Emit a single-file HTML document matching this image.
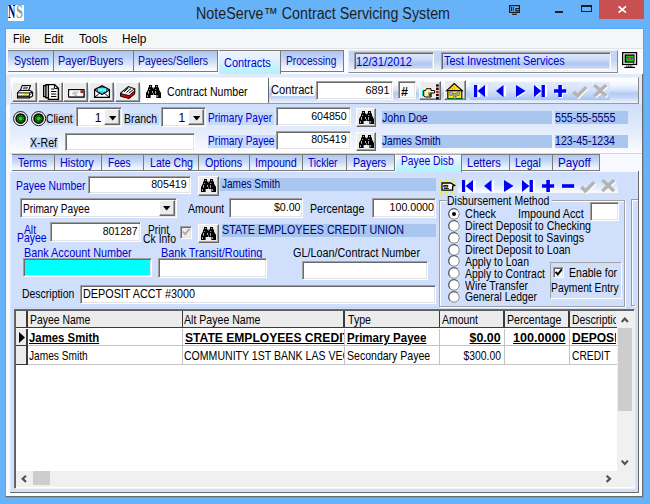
<!DOCTYPE html>
<html>
<head>
<meta charset="utf-8">
<title>NoteServe Contract Servicing System</title>
<style>
*{box-sizing:border-box;margin:0;padding:0}
html,body{width:650px;height:504px;overflow:hidden;background:#67b3f9;font-family:"Liberation Sans",sans-serif;font-size:13px;color:#000}
.a{position:absolute;white-space:nowrap;line-height:1}
.t{display:block}
#win{position:absolute;left:0;top:0;width:650px;height:504px;background:#67b3f9;overflow:hidden}
.inp{background:#fff;border:1px solid;border-color:#a0a0a0 #fff #fff #a0a0a0;box-shadow:inset 1px 1px 0 #696969,inset -1px -1px 0 #e3e3e3}
.btn{background:#ececec;border:1px solid;border-color:#fff #696969 #696969 #fff;box-shadow:inset -1px -1px 0 #a0a0a0}
.fld{background:#a8c6ee}
.tab{border:1px solid #7a7a7a;border-left:none;background:linear-gradient(#a9c5ef,#c0d4f5 35%,#eaf1fc 80%,#fbfcff)}
.stab{border-right:1px solid #7a7a7a;border-top:1px solid #7a7a7a;background:linear-gradient(#aec7f1,#c4d7f6 40%,#eef3fd 85%,#f6f9fe)}
svg{position:absolute;overflow:visible}

</style>
</head>
<body>
<div id="win">
<div class="a " style="left:8.00px;top:4.90px;width:16.00px;height:16.00px;background:#fff;overflow:hidden"><div class="a" style="left:0.2px;top:-1.8px;font-family:'Liberation Serif',serif;font-weight:bold;font-size:18px;color:#000068;transform:scaleX(.56);transform-origin:0 0">N</div><div class="a" style="left:7.8px;top:-1.8px;font-family:'Liberation Serif',serif;font-weight:bold;font-size:18px;color:#9a9aa2;transform:scaleX(.7);transform-origin:0 0">S</div></div>
<div class="a t" style="top:6.00px;font-size:16px;color:#1e1e1e;left:196.29px;transform-origin:0 0;transform:scaleX(0.8926);">NoteServe™ Contract Servicing System</div>
<svg style="left:508.50px;top:4.50px" width="11" height="10" viewBox="0 0 11 10"><rect x=".6" y=".6" width="9.8" height="6.8" fill="none" stroke="#1e1e1e" stroke-width="1.2"/><path d="M2.5 2v4M4.3 2v4" stroke="#1e1e1e" stroke-width="1"/><rect x="6.3" y="3" width="4.7" height="3.4" fill="#1e1e1e"/><rect x="7.6" y="4" width="2" height="1.2" fill="#67b3f9"/><path d="M3 9.3h5" stroke="#1e1e1e" stroke-width="1.2"/></svg>
<div class="a " style="left:555.30px;top:10.50px;width:8.10px;height:2.20px;background:#1e1e1e"></div>
<div class="a " style="left:581.00px;top:5.40px;width:10.50px;height:7.00px;border:1px solid #1e1e1e;border-top-width:2px"></div>
<div class="a " style="left:599.00px;top:0.00px;width:45.00px;height:18.60px;background:#c75050"></div>
<svg style="left:617.80px;top:6.00px" width="8.6" height="7" viewBox="0 0 8.6 7"><path d="M.6 .3l7.4 6.4M8 .3l-7.4 6.4" stroke="#fff" stroke-width="1.7"/></svg>
<div class="a " style="left:5.00px;top:28.00px;width:639.00px;height:470.00px;background:#58a5f0"></div>
<div class="a " style="left:6.00px;top:29.00px;width:637.00px;height:468.00px;background:#c3d8f8"></div>
<div class="a " style="left:6.00px;top:29.00px;width:637.00px;height:19.00px;background:#f5f6f7"></div>
<div class="a t" style="top:33.00px;font-size:12px;color:#000;left:12.96px;transform-origin:0 0;transform:scaleX(0.8948);">File</div>
<div class="a t" style="top:33.00px;font-size:12px;color:#000;left:44.43px;transform-origin:0 0;transform:scaleX(0.9430);">Edit</div>
<div class="a t" style="top:33.00px;font-size:12px;color:#000;left:78.89px;transform-origin:0 0;transform:scaleX(1.0103);">Tools</div>
<div class="a t" style="top:33.00px;font-size:12px;color:#000;left:121.71px;transform-origin:0 0;transform:scaleX(0.9887);">Help</div>
<div class="a " style="left:6.00px;top:48.00px;width:637.00px;height:26.20px;background:#fafbfe"></div>
<div class="a " style="left:6.00px;top:74.20px;width:637.00px;height:30.80px;background:#e2ebfc"></div>
<div class="a " style="left:6.00px;top:48.00px;width:637.00px;height:1.00px;background:#e2e3e5"></div>
<div class="a " style="left:7.60px;top:50.30px;width:1.00px;height:22.10px;background:#7a7a7a"></div>
<div class="a tab" style="left:8.00px;top:50.30px;width:45.50px;height:22.10px;"></div>
<div class="a t" style="top:55.00px;font-size:12px;color:#0a0aa8;left:13.78px;transform-origin:0 0;transform:scaleX(0.8748);">System</div>
<div class="a tab" style="left:53.50px;top:50.30px;width:80.20px;height:22.10px;"></div>
<div class="a t" style="top:55.00px;font-size:12px;color:#0a0aa8;left:58.46px;transform-origin:0 0;transform:scaleX(0.9066);">Payer/Buyers</div>
<div class="a tab" style="left:133.70px;top:50.30px;width:84.70px;height:22.10px;"></div>
<div class="a t" style="top:55.00px;font-size:12px;color:#0a0aa8;left:138.48px;transform-origin:0 0;transform:scaleX(0.8746);">Payees/Sellers</div>
<div class="a tab" style="left:280.70px;top:50.30px;width:63.30px;height:22.10px;"></div>
<div class="a t" style="top:55.00px;font-size:12px;color:#0a0aa8;left:285.89px;transform-origin:0 0;transform:scaleX(0.8474);">Processing</div>
<div class="a " style="left:218.40px;top:50.30px;width:62.50px;height:23.70px;border:1px solid #7a7a7a;border-bottom:none;border-left-color:#fff;background:linear-gradient(#f0f4fe,#e2f0fd 35%,#c2f3fb 75%,#b2f1fb)"></div>
<div class="a t" style="top:57.00px;font-size:12px;color:#0000d8;left:223.95px;transform-origin:0 0;transform:scaleX(0.9114);">Contracts</div>
<div class="a " style="left:348.30px;top:50.30px;width:269.70px;height:22.50px;border:1px solid;border-color:#dfe8f8 #8c8c8c #8c8c8c #e8eefa;background:linear-gradient(#c4d6f6,#c3d5f5 45%,#e6edfb 85%,#f6f8fe)"></div>
<div class="a inp" style="left:354.20px;top:52.20px;width:79.80px;height:17.40px;background:linear-gradient(#e0e9fb,#cfdef8 35%,#aec7f1 70%,#cbdbf7 100%)"></div>
<div class="a inp" style="left:441.00px;top:52.20px;width:169.60px;height:17.40px;background:linear-gradient(#e0e9fb,#cfdef8 35%,#aec7f1 70%,#cbdbf7 100%)"></div>
<div class="a t" style="top:56.00px;font-size:12px;color:#0000d8;left:356.44px;transform-origin:0 0;transform:scaleX(0.9325);">12/31/2012</div>
<div class="a t" style="top:55.00px;font-size:12px;color:#0000d8;left:443.86px;transform-origin:0 0;transform:scaleX(0.9049);">Test Investment Services</div>
<svg style="left:621.90px;top:51.80px" width="15.2" height="16" viewBox="0 0 15.2 16"><rect x=".65" y=".65" width="13.9" height="11.8" fill="#fff" stroke="#000" stroke-width="1.3"/><rect x="2.6" y="2.4" width="10" height="8.3" fill="#000"/><rect x="4.2" y="3.7" width="7.5" height="5.7" fill="#00e000"/><rect x="5.2" y="4.7" width="2" height="1.8" fill="#f00000"/><rect x="8.6" y="4.7" width="2" height="1.8" fill="#f00000"/><rect x="5.2" y="6.4" width="5.4" height="1.3" fill="#f000e0"/><rect x="11" y="11" width="1.1" height="1.1" fill="#f00000"/><rect x="5.6" y="13" width="4" height="1.9" fill="#b0b0b0"/><path d="M4 14.2h7.2" stroke="#000" stroke-width=".8" stroke-dasharray="1.4 .8"/><rect x="2.3" y="14.9" width="10.8" height="1.1" fill="#000"/></svg>
<div class="a " style="left:9.70px;top:77.00px;width:629.10px;height:27.30px;border:1px solid;border-color:#eef2fb #8a8a8a #9a9a9a #f4f7fd;background:linear-gradient(#fff 0%,#f4f8fe 25%,#dbe6fb 45%,#b3cbf3 62%,#c3d6f6 78%,#e9f0fc 97%)"></div>
<div class="a btn" style="left:12.00px;top:82.00px;width:25.00px;height:19.60px;"></div>
<div class="a btn" style="left:37.80px;top:82.00px;width:25.00px;height:19.60px;"></div>
<div class="a btn" style="left:63.40px;top:82.00px;width:25.00px;height:19.60px;"></div>
<div class="a btn" style="left:89.00px;top:82.00px;width:25.00px;height:19.60px;"></div>
<div class="a btn" style="left:114.60px;top:82.00px;width:25.00px;height:19.60px;"></div>
<svg style="left:16.80px;top:84.80px" width="16" height="13.5" viewBox="0 0 16 13.5"><path d="M5.2 .5h8.2l-1.8 5h-8.2z" fill="#fff" stroke="#000" stroke-width="1.1"/><path d="M6.4 2.2h4.6M5.8 3.8h4.6" stroke="#000" stroke-width=".8"/><path d="M2.6 5.5h10.6l2.4 1.8v3.6l-3.2 2h-11.9v-5z" fill="#fff" stroke="#000" stroke-width="1.1"/><path d="M.5 7.9h11.9l3.2-.6M12.4 7.9v5" fill="none" stroke="#000" stroke-width="1"/><path d="M.5 11.2h11.9" stroke="#000" stroke-width="1.3"/><rect x="6.6" y="9" width="3.2" height="1.2" fill="#f0e000"/><path d="M13 9.6l2.4-1.4" stroke="#000" stroke-width=".7"/></svg>
<svg style="left:43.00px;top:83.90px" width="16" height="16" viewBox="0 0 16 16"><path d="M.7 1.6h3.6v11h-3.6z" fill="#fff" stroke="#000" stroke-width="1.4"/><path d="M2.9 .8h3.6v13h-3.6z" fill="#fff" stroke="#000" stroke-width="1.4"/><path d="M5.4 .6h6.2l3.8 3.8v11h-10z" fill="#fff" stroke="#000" stroke-width="1.4"/><path d="M11.4 .8v3.8h3.8" fill="none" stroke="#000" stroke-width="1"/><path d="M8 5h3M8 7.5h5.4M8 10h5.4M8 12.5h5.4" stroke="#000" stroke-width="1"/></svg>
<svg style="left:67.80px;top:88.70px" width="16.7" height="8.8" viewBox="0 0 16.7 8.8"><rect x=".6" y=".6" width="15.4" height="7.4" fill="#fff" stroke="#000" stroke-width="1.1"/><path d="M1.2 8.3h15.2v-7" fill="none" stroke="#000" stroke-width=".6"/><rect x="12.4" y="1.3" width="3" height="2.8" fill="#e01010"/><rect x="13.6" y="1.3" width="1.8" height="1.4" fill="#10a030"/><rect x="14.3" y="1.7" width="1.1" height="1.1" fill="#1020d0"/><path d="M5 3.2h5.6M4 4.8h5M6 6.2h3.6" stroke="#777" stroke-width=".6"/></svg>
<svg style="left:94.20px;top:84.80px" width="16" height="13" viewBox="0 0 16 13"><path d="M.6 4.6l7.4-4 7.4 4v7.8h-14.8z" fill="#fff" stroke="#000" stroke-width="1.2"/><path d="M3 3.2q5-2.6 10 0v3.6l-5 2.6-5-2.6z" fill="#18e0f0" stroke="#000" stroke-width=".8"/><path d="M4 4.1h8M4 5.7h8" stroke="#a0f8ff" stroke-width=".9"/><path d="M.6 5l7.4 4.6 7.4-4.6M.8 12.2l5.4-4.4M15.2 12.2l-5.4-4.4" fill="none" stroke="#000" stroke-width="1"/></svg>
<svg style="left:119.50px;top:85.60px" width="15.3" height="12.7" viewBox="0 0 15.3 12.7"><path d="M.6 7.2l7.8-6.6 6.4 2.2-.2 3.8-5.6 5.6-8.4-2.6z" fill="#fff" stroke="#000" stroke-width="1.1"/><path d="M4 5.8l4.6-4M6.4 6.6l4.8-4.2M8.8 7.2l5-4" stroke="#000" stroke-width="1"/><path d="M.7 7.6l8.5 2 5.4-4.8v3.4l-5.4 4.2-8.5-2z" fill="#e80000" stroke="#000" stroke-width=".9"/><path d="M9.2 9.6v2.8" stroke="#500" stroke-width=".7"/></svg>
<div class="a " style="left:140.60px;top:78.00px;width:128.00px;height:25.40px;background:#fff;border-right:1px solid #6a6a6a"></div>
<svg style="left:146.20px;top:85.00px" width="15" height="13" viewBox="0 0 15 13"><path d="M3 0h3v2.5h1.3v7.5h-2.7v3h-4.6v-5l2-3.5v-2h1z" fill="#000"/><path d="M12 0h-3v2.5h-1.3v7.5h2.7v3h4.6v-5l-2-3.5v-2h-1z" fill="#000"/><rect x="6.8" y="3.8" width="1.4" height="4.4" fill="#000"/><g fill="#fff" opacity=".85"><rect x="4" y="1" width=".9" height=".9"/><rect x="10" y="1" width=".9" height=".9"/><rect x="3.2" y="4" width=".9" height=".9"/><rect x="9.3" y="4" width=".9" height=".9"/><rect x="2.1" y="6" width=".8" height="2.8"/><rect x="6" y="6" width=".8" height="1.9"/><rect x="9.2" y="6" width=".8" height="2.8"/><rect x="1.2" y="10.2" width=".8" height="1.8"/><rect x="11.3" y="10.2" width=".8" height="1.8"/></g></svg>
<div class="a t" style="top:86.00px;font-size:12px;color:#000;left:167.47px;transform-origin:0 0;transform:scaleX(0.8822);">Contract Number</div>
<div class="a " style="left:271.50px;top:83.50px;width:43.00px;height:12.50px;background:#f8faff"></div>
<div class="a t" style="top:84.00px;font-size:12px;color:#000;left:271.44px;transform-origin:0 0;transform:scaleX(0.9261);">Contract</div>
<div class="a inp" style="left:316.00px;top:81.00px;width:77.00px;height:18.60px;"></div>
<div class="a t" style="top:85.00px;font-size:11px;color:#000;right:260.30px;transform-origin:100% 0;transform:scaleX(0.9808);">6891</div>
<div class="a inp" style="left:397.60px;top:81.00px;width:18.00px;height:18.20px;background:#fbfbfb"></div>
<div class="a t" style="top:86.00px;font-size:12px;color:#000;font-weight:bold;left:400.97px;transform-origin:0 0;transform:scaleX(1.0489);">#</div>
<div class="a btn" style="left:418.50px;top:80.50px;width:22.30px;height:19.50px;"></div>
<svg style="left:421.50px;top:83.50px" width="17" height="16" viewBox="0 0 17 16"><g transform="translate(0,4.2)"><rect x="0" y="2.1" width="1.7" height="5.9" fill="#10d8e8"/><path d="M1.7 2.3h1.9l.8-1.8h4.6v1.8h3.6v2.5h-3.5v4h-5.4l-2-1z" fill="#fbf4a0" stroke="#000" stroke-width="1"/><path d="M6.2 4.8h2.9M6.6 6.2h2.5M6.6 7.5h2.5" stroke="#000" stroke-width=".8"/></g><g fill="#000"><rect x="14.1" y="0.3" width="2.6" height="2.3"/><rect x="14.1" y="3.6" width="2.6" height="2.3"/><rect x="14.1" y="9.8" width="2.6" height="2.3"/><rect x="14.1" y="13" width="2.6" height="2.3"/></g><rect x="14.1" y="6.8" width="2.6" height="2.2" fill="#f00000"/></svg>
<div class="a btn" style="left:444.00px;top:80.00px;width:21.50px;height:20.30px;"></div>
<svg style="left:446.00px;top:82.80px" width="18" height="16.7" viewBox="0 0 18 16.7"><path d="M.6 7.6l7.6-7 8 7z" fill="#f8e820" stroke="#000" stroke-width="1.1"/><path d="M4 6l4-3.6M6 6.4l3.4-3M8.4 6.4l2-1.8" stroke="#e02000" stroke-width=".9" stroke-dasharray=".9 1.5"/><path d="M1.8 7.6h14v8h-14z" fill="#f8e820" stroke="#000" stroke-width="1.1"/><rect x="3.8" y="9" width="2.6" height="3.6" fill="#b0b0c0" stroke="#606060" stroke-width=".6"/><rect x="11" y="9" width="2.6" height="3.6" fill="#b0b0c0" stroke="#606060" stroke-width=".6"/><rect x="7.6" y="10.6" width="2.4" height="5" fill="#b0b0c0" stroke="#606060" stroke-width=".6"/><rect x="9.2" y="12.8" width=".9" height=".9" fill="#e00000"/><rect x="1" y="15.6" width="17" height="1.1" fill="#10e010"/></svg>
<div class="a " style="left:470.00px;top:82.10px;width:140.00px;height:17.80px;background:linear-gradient(#e3ecfc,#d5e2fa 45%,#a9c4f0)"></div>
<svg style="left:473.80px;top:84.90px" width="14" height="12" viewBox="0 0 14 12"><path d="M0 0h3.2v12h-3.2zM11 0v12l-7.4-6z" fill="#fff" transform="translate(2.6,0)"/><path d="M0 0h3.2v12h-3.2zM11 0v12l-7.4-6z" fill="#0000f0"/></svg>
<svg style="left:495.70px;top:84.90px" width="10" height="12" viewBox="0 0 10 12"><path d="M7.5 0v12l-7.5-6z" fill="#fff" transform="translate(2.6,0)"/><path d="M7.5 0v12l-7.5-6z" fill="#0000f0"/></svg>
<svg style="left:516.00px;top:84.90px" width="11" height="13" viewBox="0 0 11 13"><path d="M0 0v12l9.6-6z" fill="#fff" transform="translate(.8,1)"/><path d="M0 0v12l9.6-6z" fill="#0000f0"/></svg>
<svg style="left:534.20px;top:84.90px" width="13" height="12" viewBox="0 0 13 12"><path d="M0 0v12l7.4-6zM7.6 0h3.3v12h-3.3z" fill="#fff" transform="translate(2.2,0)"/><path d="M0 0v12l7.4-6zM7.6 0h3.3v12h-3.3z" fill="#0000f0"/></svg>
<svg style="left:553.80px;top:84.90px" width="13.5" height="13" viewBox="0 0 13.5 13"><path d="M4.3 0h3.6v4.2h4.3v3.6h-4.3v4.2h-3.6v-4.2h-4.3v-3.6h4.3z" fill="#fff" transform="translate(1,1)"/><path d="M4.3 0h3.6v4.2h4.3v3.6h-4.3v4.2h-3.6v-4.2h-4.3v-3.6h4.3z" fill="#0000f0"/></svg>
<svg style="left:572.00px;top:85.60px" width="16.5" height="13.5" viewBox="0 0 16.5 13.5"><path d="M0 7.2l2.8-2.6 2.8 2.6 7.4-7.2 2.5 2.2-10 10.3z" fill="#fff" transform="translate(1,1)"/><path d="M0 7.2l2.8-2.6 2.8 2.6 7.4-7.2 2.5 2.2-10 10.3z" fill="#b4b4b4"/></svg>
<svg style="left:593.00px;top:84.20px" width="15.4" height="14.3" viewBox="0 0 15.4 14.3"><path d="M0 2.2l2.6-2.2 4.6 4 4.6-4 2.6 2.2-4.8 4.4 4.8 4.4-2.6 2.3-4.6-4.2-4.6 4.2-2.6-2.3 4.8-4.4z" fill="#fff" transform="translate(1,1)"/><path d="M0 2.2l2.6-2.2 4.6 4 4.6-4 2.6 2.2-4.8 4.4 4.8 4.4-2.6 2.3-4.6-4.2-4.6 4.2-2.6-2.3 4.8-4.4z" fill="#b4b4b4"/></svg>
<div class="a " style="left:10.30px;top:104.30px;width:631.70px;height:49.20px;background:linear-gradient(#cfdffb 0%,#d9e6fb 30%,#e6eefc 60%,#f3f7fe 85%,#fbfcff 100%)"></div>
<svg style="left:12.80px;top:110.60px" width="15.2" height="15.2" viewBox="0 0 15.2 15.2"><circle cx="7.6" cy="7.6" r="7.05" fill="#f4f4f4" stroke="#101010" stroke-width="1"/><circle cx="7.6" cy="7.6" r="4.6" fill="#063406" stroke="#050505" stroke-width="1.4"/><circle cx="7.6" cy="7.6" r="3.2" fill="none" stroke="#28e828" stroke-width=".9" stroke-dasharray="1.25 1.26"/><circle cx="7.6" cy="7.6" r="2.1" fill="#10d810"/></svg>
<svg style="left:31.30px;top:110.60px" width="15.2" height="15.2" viewBox="0 0 15.2 15.2"><circle cx="7.6" cy="7.6" r="7.05" fill="#f4f4f4" stroke="#101010" stroke-width="1"/><circle cx="7.6" cy="7.6" r="4.6" fill="#063406" stroke="#050505" stroke-width="1.4"/><circle cx="7.6" cy="7.6" r="3.2" fill="none" stroke="#28e828" stroke-width=".9" stroke-dasharray="1.25 1.26"/><circle cx="7.6" cy="7.6" r="2.1" fill="#10d810"/></svg>
<div class="a " style="left:46.00px;top:112.50px;width:28.50px;height:12.50px;background:#c8dafa"></div>
<div class="a t" style="top:112.00px;font-size:13px;color:#000;left:46.28px;transform-origin:0 0;transform:scaleX(0.8004);">Client</div>
<div class="a inp" style="left:75.90px;top:107.10px;width:45.90px;height:19.90px;"></div>
<div class="a t" style="top:112.00px;font-size:12px;color:#000;left:94.70px;transform-origin:0 0;transform:scaleX(1.0000);">1</div>
<div class="a btn" style="left:104.40px;top:109.20px;width:15.80px;height:16.10px;"></div>
<svg style="left:108.80px;top:115.90px" width="7.4" height="4.4" viewBox="0 0 7.4 4.4"><path d="M0 0h7.4l-3.7 4.4z" fill="#000"/></svg>
<div class="a " style="left:123.50px;top:112.50px;width:35.00px;height:12.50px;background:#c8dafa"></div>
<div class="a t" style="top:112.00px;font-size:13px;color:#000;left:123.88px;transform-origin:0 0;transform:scaleX(0.8012);">Branch</div>
<div class="a inp" style="left:161.00px;top:107.10px;width:44.90px;height:19.70px;"></div>
<div class="a t" style="top:112.00px;font-size:12px;color:#000;left:178.60px;transform-origin:0 0;transform:scaleX(1.0000);">1</div>
<div class="a btn" style="left:188.30px;top:109.20px;width:16.10px;height:16.00px;"></div>
<svg style="left:193.00px;top:115.70px" width="7.4" height="4.4" viewBox="0 0 7.4 4.4"><path d="M0 0h7.4l-3.7 4.4z" fill="#000"/></svg>
<div class="a " style="left:207.50px;top:111.50px;width:66.50px;height:13.00px;background:#c8dafa"></div>
<div class="a t" style="top:111.00px;font-size:13px;color:#0000d0;left:207.99px;transform-origin:0 0;transform:scaleX(0.7772);">Primary Payer</div>
<div class="a inp" style="left:276.20px;top:106.90px;width:74.60px;height:19.60px;"></div>
<div class="a t" style="top:111.00px;font-size:11px;color:#000;right:302.80px;transform-origin:100% 0;transform:scaleX(0.9672);">604850</div>
<div class="a btn" style="left:356.30px;top:107.60px;width:20.00px;height:19.80px;"></div>
<svg style="left:359.00px;top:110.80px" width="15" height="13" viewBox="0 0 15 13"><path d="M3 0h3v2.5h1.3v7.5h-2.7v3h-4.6v-5l2-3.5v-2h1z" fill="#000"/><path d="M12 0h-3v2.5h-1.3v7.5h2.7v3h4.6v-5l-2-3.5v-2h-1z" fill="#000"/><rect x="6.8" y="3.8" width="1.4" height="4.4" fill="#000"/><g fill="#fff" opacity=".85"><rect x="4" y="1" width=".9" height=".9"/><rect x="10" y="1" width=".9" height=".9"/><rect x="3.2" y="4" width=".9" height=".9"/><rect x="9.3" y="4" width=".9" height=".9"/><rect x="2.1" y="6" width=".8" height="2.8"/><rect x="6" y="6" width=".8" height="1.9"/><rect x="9.2" y="6" width=".8" height="2.8"/><rect x="1.2" y="10.2" width=".8" height="1.8"/><rect x="11.3" y="10.2" width=".8" height="1.8"/></g></svg>
<div class="a fld" style="left:381.50px;top:111.40px;width:170.10px;height:12.80px;"></div>
<div class="a t" style="top:111.00px;font-size:13px;color:#00007c;left:381.77px;transform-origin:0 0;transform:scaleX(0.8230);">John Doe</div>
<div class="a fld" style="left:554.50px;top:111.40px;width:73.50px;height:12.80px;"></div>
<div class="a t" style="top:111.00px;font-size:13px;color:#00007c;left:554.77px;transform-origin:0 0;transform:scaleX(0.8179);">555-55-5555</div>
<div class="a " style="left:30.30px;top:136.50px;width:28.00px;height:12.30px;background:#c8dafa"></div>
<div class="a t" style="top:136.00px;font-size:13px;color:#000;left:30.27px;transform-origin:0 0;transform:scaleX(0.8125);">X-Ref</div>
<div class="a inp" style="left:64.50px;top:132.60px;width:130.10px;height:18.80px;"></div>
<div class="a " style="left:207.50px;top:134.50px;width:68.50px;height:13.50px;background:#c8dafa"></div>
<div class="a t" style="top:134.00px;font-size:13px;color:#0000d0;left:207.99px;transform-origin:0 0;transform:scaleX(0.7801);">Primary Payee</div>
<div class="a inp" style="left:276.20px;top:130.80px;width:74.60px;height:18.80px;"></div>
<div class="a t" style="top:134.00px;font-size:11px;color:#000;right:302.80px;transform-origin:100% 0;transform:scaleX(0.9672);">805419</div>
<div class="a btn" style="left:356.30px;top:132.40px;width:20.00px;height:18.50px;"></div>
<svg style="left:359.00px;top:135.00px" width="15" height="13" viewBox="0 0 15 13"><path d="M3 0h3v2.5h1.3v7.5h-2.7v3h-4.6v-5l2-3.5v-2h1z" fill="#000"/><path d="M12 0h-3v2.5h-1.3v7.5h2.7v3h4.6v-5l-2-3.5v-2h-1z" fill="#000"/><rect x="6.8" y="3.8" width="1.4" height="4.4" fill="#000"/><g fill="#fff" opacity=".85"><rect x="4" y="1" width=".9" height=".9"/><rect x="10" y="1" width=".9" height=".9"/><rect x="3.2" y="4" width=".9" height=".9"/><rect x="9.3" y="4" width=".9" height=".9"/><rect x="2.1" y="6" width=".8" height="2.8"/><rect x="6" y="6" width=".8" height="1.9"/><rect x="9.2" y="6" width=".8" height="2.8"/><rect x="1.2" y="10.2" width=".8" height="1.8"/><rect x="11.3" y="10.2" width=".8" height="1.8"/></g></svg>
<div class="a fld" style="left:381.50px;top:134.50px;width:170.10px;height:13.10px;"></div>
<div class="a t" style="top:134.00px;font-size:13px;color:#00007c;left:381.79px;transform-origin:0 0;transform:scaleX(0.7813);">James Smith</div>
<div class="a fld" style="left:554.50px;top:134.50px;width:73.50px;height:13.10px;"></div>
<div class="a t" style="top:134.00px;font-size:13px;color:#00007c;left:554.77px;transform-origin:0 0;transform:scaleX(0.8138);">123-45-1234</div>
<div class="a " style="left:10.30px;top:153.50px;width:631.70px;height:18.50px;background:#f7f9fe"></div>
<div class="a " style="left:10.30px;top:170.80px;width:628.70px;height:1.00px;background:#f7f9fe"></div>
<div class="a " style="left:10.00px;top:171.80px;width:628.00px;height:135.70px;background:#d0e0fc;border-left:1px solid #dbe7fb"></div>
<div class="a " style="left:11.90px;top:154.00px;width:1.10px;height:16.80px;background:#7a7a7a"></div>
<div class="a stab" style="left:12.30px;top:154.00px;width:42.40px;height:16.80px;border-bottom:1px solid #7a7a7a"></div>
<div class="a t" style="top:156.00px;font-size:13px;color:#0000c0;left:17.97px;transform-origin:0 0;transform:scaleX(0.8138);">Terms</div>
<div class="a stab" style="left:54.70px;top:154.00px;width:47.50px;height:16.80px;border-bottom:1px solid #7a7a7a"></div>
<div class="a t" style="top:156.00px;font-size:13px;color:#0000c0;left:59.76px;transform-origin:0 0;transform:scaleX(0.8332);">History</div>
<div class="a stab" style="left:102.20px;top:154.00px;width:41.80px;height:16.80px;border-bottom:1px solid #7a7a7a"></div>
<div class="a t" style="top:156.00px;font-size:13px;color:#0000c0;left:107.89px;transform-origin:0 0;transform:scaleX(0.7820);">Fees</div>
<div class="a stab" style="left:144.00px;top:154.00px;width:55.40px;height:16.80px;border-bottom:1px solid #7a7a7a"></div>
<div class="a t" style="top:156.00px;font-size:13px;color:#0000c0;left:149.67px;transform-origin:0 0;transform:scaleX(0.8150);">Late Chg</div>
<div class="a stab" style="left:199.40px;top:154.00px;width:50.60px;height:16.80px;border-bottom:1px solid #7a7a7a"></div>
<div class="a t" style="top:156.00px;font-size:13px;color:#0000c0;left:205.06px;transform-origin:0 0;transform:scaleX(0.8259);">Options</div>
<div class="a stab" style="left:250.00px;top:154.00px;width:53.30px;height:16.80px;border-bottom:1px solid #7a7a7a"></div>
<div class="a t" style="top:156.00px;font-size:13px;color:#0000c0;left:255.06px;transform-origin:0 0;transform:scaleX(0.8262);">Impound</div>
<div class="a stab" style="left:303.30px;top:154.00px;width:43.70px;height:16.80px;border-bottom:1px solid #7a7a7a"></div>
<div class="a t" style="top:156.00px;font-size:13px;color:#0000c0;left:308.49px;transform-origin:0 0;transform:scaleX(0.7806);">Tickler</div>
<div class="a stab" style="left:347.00px;top:154.00px;width:48.00px;height:16.80px;border-bottom:1px solid #7a7a7a"></div>
<div class="a t" style="top:156.00px;font-size:13px;color:#0000c0;left:352.77px;transform-origin:0 0;transform:scaleX(0.8206);">Payers</div>
<div class="a stab" style="left:462.00px;top:154.00px;width:48.00px;height:16.80px;border-bottom:1px solid #7a7a7a"></div>
<div class="a t" style="top:156.00px;font-size:13px;color:#0000c0;left:466.75px;transform-origin:0 0;transform:scaleX(0.8479);">Letters</div>
<div class="a stab" style="left:510.00px;top:154.00px;width:42.80px;height:16.80px;border-bottom:1px solid #7a7a7a"></div>
<div class="a t" style="top:156.00px;font-size:13px;color:#0000c0;left:515.37px;transform-origin:0 0;transform:scaleX(0.8112);">Legal</div>
<div class="a stab" style="left:552.80px;top:154.00px;width:47.20px;height:16.80px;border-bottom:1px solid #7a7a7a"></div>
<div class="a t" style="top:156.00px;font-size:13px;color:#0000c0;left:557.62px;transform-origin:0 0;transform:scaleX(0.8957);">Payoff</div>
<div class="a " style="left:395.00px;top:154.20px;width:67.40px;height:17.40px;border:1px solid #7a7a7a;border-top-color:#a8a8a8;border-bottom:none;border-left-color:#fff;background:linear-gradient(#f6f9fe,#dcf3fd 40%,#b8f4fc 80%,#aef4fc)"></div>
<div class="a t" style="top:154.00px;font-size:13px;color:#0000d8;left:400.78px;transform-origin:0 0;transform:scaleX(0.7928);">Payee Disb</div>
<div class="a t" style="top:179.00px;font-size:13px;color:#0000d0;left:16.18px;transform-origin:0 0;transform:scaleX(0.8015);">Payee Number</div>
<div class="a inp" style="left:88.00px;top:175.80px;width:102.80px;height:18.60px;"></div>
<div class="a t" style="top:179.00px;font-size:11px;color:#000;right:462.80px;transform-origin:100% 0;transform:scaleX(0.9672);">805419</div>
<div class="a btn" style="left:198.00px;top:176.00px;width:21.20px;height:19.60px;"></div>
<svg style="left:201.00px;top:179.30px" width="15" height="13" viewBox="0 0 15 13"><path d="M3 0h3v2.5h1.3v7.5h-2.7v3h-4.6v-5l2-3.5v-2h1z" fill="#000"/><path d="M12 0h-3v2.5h-1.3v7.5h2.7v3h4.6v-5l-2-3.5v-2h-1z" fill="#000"/><rect x="6.8" y="3.8" width="1.4" height="4.4" fill="#000"/><g fill="#fff" opacity=".85"><rect x="4" y="1" width=".9" height=".9"/><rect x="10" y="1" width=".9" height=".9"/><rect x="3.2" y="4" width=".9" height=".9"/><rect x="9.3" y="4" width=".9" height=".9"/><rect x="2.1" y="6" width=".8" height="2.8"/><rect x="6" y="6" width=".8" height="1.9"/><rect x="9.2" y="6" width=".8" height="2.8"/><rect x="1.2" y="10.2" width=".8" height="1.8"/><rect x="11.3" y="10.2" width=".8" height="1.8"/></g></svg>
<div class="a fld" style="left:220.30px;top:177.60px;width:215.50px;height:13.10px;"></div>
<div class="a t" style="top:177.00px;font-size:13px;color:#00007c;left:221.50px;transform-origin:0 0;transform:scaleX(0.7720);">James Smith</div>
<svg style="left:438.70px;top:178.80px" width="16.6" height="15.4" viewBox="0 0 16.6 15.4"><path d="M.4 .6l4.4 4M15.6 .2l-4.6 4.4M7.8 0v4M.6 15l4.4-4M14.6 15l-3.6-3.6M8 15.4v-4M0 7.6h3M16.6 8.4h-3" stroke="#f8f000" stroke-width="1.5"/><path d="M3 4h8.6l4 2.4-2 .8v4h-10.6z" fill="#fff" stroke="#000" stroke-width="1.3"/><path d="M4.8 6.4h4v1.6h-4zM4.8 9.4h5" fill="none" stroke="#000" stroke-width="1"/></svg>
<div class="a " style="left:458.40px;top:176.80px;width:159.50px;height:16.60px;background:linear-gradient(#d0e0fc,#d6e4fb 45%,#fbfcff)"></div>
<svg style="left:461.80px;top:180.00px" width="14" height="12" viewBox="0 0 14 12"><path d="M0 0h3.2v12h-3.2zM11 0v12l-7.4-6z" fill="#fff" transform="translate(2.6,0)"/><path d="M0 0h3.2v12h-3.2zM11 0v12l-7.4-6z" fill="#0000f0"/></svg>
<svg style="left:484.00px;top:180.00px" width="10" height="12" viewBox="0 0 10 12"><path d="M7.5 0v12l-7.5-6z" fill="#fff" transform="translate(2.6,0)"/><path d="M7.5 0v12l-7.5-6z" fill="#0000f0"/></svg>
<svg style="left:504.30px;top:180.00px" width="11" height="13" viewBox="0 0 11 13"><path d="M0 0v12l9.6-6z" fill="#fff" transform="translate(.8,1)"/><path d="M0 0v12l9.6-6z" fill="#0000f0"/></svg>
<svg style="left:522.00px;top:180.00px" width="13" height="12" viewBox="0 0 13 12"><path d="M0 0v12l7.4-6zM7.6 0h3.3v12h-3.3z" fill="#fff" transform="translate(2.2,0)"/><path d="M0 0v12l7.4-6zM7.6 0h3.3v12h-3.3z" fill="#0000f0"/></svg>
<svg style="left:542.20px;top:180.00px" width="13.5" height="13" viewBox="0 0 13.5 13"><path d="M4.3 0h3.6v4.2h4.3v3.6h-4.3v4.2h-3.6v-4.2h-4.3v-3.6h4.3z" fill="#fff" transform="translate(1,1)"/><path d="M4.3 0h3.6v4.2h4.3v3.6h-4.3v4.2h-3.6v-4.2h-4.3v-3.6h4.3z" fill="#0000f0"/></svg>
<svg style="left:562.00px;top:180.00px" width="13.5" height="13" viewBox="0 0 13.5 13"><rect x="1" y="5.2" width="12.2" height="3.6" fill="#fff"/><rect x="0" y="4.2" width="12.2" height="3.6" fill="#0000f0"/></svg>
<svg style="left:580.00px;top:180.60px" width="16.5" height="13.5" viewBox="0 0 16.5 13.5"><path d="M0 7.2l2.8-2.6 2.8 2.6 7.4-7.2 2.5 2.2-10 10.3z" fill="#fff" transform="translate(1,1)"/><path d="M0 7.2l2.8-2.6 2.8 2.6 7.4-7.2 2.5 2.2-10 10.3z" fill="#b4b4b4"/></svg>
<svg style="left:601.30px;top:179.40px" width="15.4" height="14.3" viewBox="0 0 15.4 14.3"><path d="M0 2.2l2.6-2.2 4.6 4 4.6-4 2.6 2.2-4.8 4.4 4.8 4.4-2.6 2.3-4.6-4.2-4.6 4.2-2.6-2.3 4.8-4.4z" fill="#fff" transform="translate(1,1)"/><path d="M0 2.2l2.6-2.2 4.6 4 4.6-4 2.6 2.2-4.8 4.4 4.8 4.4-2.6 2.3-4.6-4.2-4.6 4.2-2.6-2.3 4.8-4.4z" fill="#b4b4b4"/></svg>
<div class="a inp" style="left:20.20px;top:198.20px;width:156.50px;height:19.40px;"></div>
<div class="a t" style="top:202.00px;font-size:13px;color:#000;left:22.89px;transform-origin:0 0;transform:scaleX(0.7812);">Primary Payee</div>
<div class="a btn" style="left:159.20px;top:200.40px;width:15.50px;height:15.20px;"></div>
<svg style="left:163.30px;top:206.20px" width="7.4" height="4.4" viewBox="0 0 7.4 4.4"><path d="M0 0h7.4l-3.7 4.4z" fill="#000"/></svg>
<div class="a t" style="top:202.00px;font-size:13px;color:#000;left:188.47px;transform-origin:0 0;transform:scaleX(0.8102);">Amount</div>
<div class="a inp" style="left:229.30px;top:198.20px;width:73.60px;height:20.10px;"></div>
<div class="a t" style="top:202.00px;font-size:11px;color:#000;right:349.40px;transform-origin:100% 0;transform:scaleX(0.9664);">$0.00</div>
<div class="a t" style="top:202.00px;font-size:13px;color:#000;left:310.17px;transform-origin:0 0;transform:scaleX(0.8167);">Percentage</div>
<div class="a inp" style="left:372.20px;top:198.00px;width:63.60px;height:20.30px;"></div>
<div class="a t" style="top:202.00px;font-size:11px;color:#000;right:216.50px;transform-origin:100% 0;transform:scaleX(0.9656);">100.0000</div>
<div class="a t" style="top:223.00px;font-size:13px;color:#0000d0;left:24.09px;transform-origin:0 0;transform:scaleX(0.7910);">Alt</div>
<div class="a t" style="top:231.00px;font-size:13px;color:#0000d0;left:16.68px;transform-origin:0 0;transform:scaleX(0.8031);">Payee</div>
<div class="a inp" style="left:50.00px;top:222.20px;width:91.00px;height:19.60px;"></div>
<div class="a t" style="top:226.00px;font-size:11px;color:#000;right:512.60px;transform-origin:100% 0;transform:scaleX(0.9536);">801287</div>
<div class="a t" style="top:223.00px;font-size:13px;color:#000;left:147.99px;transform-origin:0 0;transform:scaleX(0.7856);">Print</div>
<div class="a t" style="top:232.00px;font-size:13px;color:#000;left:143.48px;transform-origin:0 0;transform:scaleX(0.8013);">Ck Info</div>
<div class="a inp" style="left:179.80px;top:225.50px;width:12.60px;height:13.00px;background:#ececec"></div>
<svg style="left:182.00px;top:228.00px" width="8" height="8" viewBox="0 0 8 8"><path d="M.8 3.5l2.4 2.6 4.2-5" fill="none" stroke="#a8a8a8" stroke-width="1.8"/></svg>
<div class="a btn" style="left:198.00px;top:223.80px;width:21.20px;height:19.60px;"></div>
<svg style="left:201.00px;top:227.00px" width="15" height="13" viewBox="0 0 15 13"><path d="M3 0h3v2.5h1.3v7.5h-2.7v3h-4.6v-5l2-3.5v-2h1z" fill="#000"/><path d="M12 0h-3v2.5h-1.3v7.5h2.7v3h4.6v-5l-2-3.5v-2h-1z" fill="#000"/><rect x="6.8" y="3.8" width="1.4" height="4.4" fill="#000"/><g fill="#fff" opacity=".85"><rect x="4" y="1" width=".9" height=".9"/><rect x="10" y="1" width=".9" height=".9"/><rect x="3.2" y="4" width=".9" height=".9"/><rect x="9.3" y="4" width=".9" height=".9"/><rect x="2.1" y="6" width=".8" height="2.8"/><rect x="6" y="6" width=".8" height="1.9"/><rect x="9.2" y="6" width=".8" height="2.8"/><rect x="1.2" y="10.2" width=".8" height="1.8"/><rect x="11.3" y="10.2" width=".8" height="1.8"/></g></svg>
<div class="a fld" style="left:221.60px;top:223.60px;width:214.20px;height:13.20px;"></div>
<div class="a t" style="top:223.00px;font-size:13px;color:#00007c;left:222.26px;transform-origin:0 0;transform:scaleX(0.8234);">STATE EMPLOYEES CREDIT UNION</div>
<div class="a t" style="top:246.00px;font-size:13px;color:#0000d0;text-decoration:underline;left:24.16px;transform-origin:0 0;transform:scaleX(0.8327);">Bank Account Number</div>
<div class="a inp" style="left:23.40px;top:258.30px;width:128.90px;height:19.10px;background:#00ffff"></div>
<div class="a t" style="top:246.00px;font-size:13px;color:#0000d0;text-decoration:underline;left:161.45px;transform-origin:0 0;transform:scaleX(0.8403);">Bank Transit/Routing</div>
<div class="a inp" style="left:157.60px;top:258.30px;width:109.40px;height:19.70px;"></div>
<div class="a t" style="top:246.00px;font-size:13px;color:#000;left:293.46px;transform-origin:0 0;transform:scaleX(0.8330);">GL/Loan/Contract Number</div>
<div class="a inp" style="left:301.60px;top:260.80px;width:126.10px;height:19.00px;"></div>
<div class="a t" style="top:287.00px;font-size:13px;color:#000;left:22.18px;transform-origin:0 0;transform:scaleX(0.8043);">Description</div>
<div class="a inp" style="left:80.00px;top:284.70px;width:355.80px;height:19.50px;"></div>
<div class="a t" style="top:287.00px;font-size:13px;color:#000;left:83.16px;transform-origin:0 0;transform:scaleX(0.8319);">DEPOSIT ACCT #3000</div>
<div class="a " style="left:439.80px;top:201.20px;width:186.60px;height:107.00px;border:1px solid #fff"></div>
<div class="a " style="left:438.80px;top:200.20px;width:186.60px;height:107.00px;border:1px solid #a0a0a0"></div>
<div class="a " style="left:446.50px;top:195.00px;width:105.00px;height:11.00px;background:#d0e0fc"></div>
<div class="a t" style="top:194.00px;font-size:13px;color:#000;left:447.48px;transform-origin:0 0;transform:scaleX(0.8044);">Disbursement Method</div>
<svg style="left:447.50px;top:208.00px" width="12" height="12" viewBox="0 0 12 12"><circle cx="6" cy="6" r="5.2" fill="#fff" stroke="#8a8a8a" stroke-width="1"/><path d="M2.1 9.6A5.2 5.2 0 0 1 9.6 2.1" fill="none" stroke="#606060" stroke-width="1.1"/><circle cx="6" cy="6" r="2" fill="#000"/></svg>
<div class="a t" style="top:207.00px;font-size:13px;color:#000;left:465.25px;transform-origin:0 0;transform:scaleX(0.8413);">Check</div>
<svg style="left:447.50px;top:219.86px" width="12" height="12" viewBox="0 0 12 12"><circle cx="6" cy="6" r="5.2" fill="#fff" stroke="#8a8a8a" stroke-width="1"/><path d="M2.1 9.6A5.2 5.2 0 0 1 9.6 2.1" fill="none" stroke="#606060" stroke-width="1.1"/></svg>
<div class="a t" style="top:219.00px;font-size:13px;color:#000;left:465.27px;transform-origin:0 0;transform:scaleX(0.8187);">Direct Deposit to Checking</div>
<svg style="left:447.50px;top:231.72px" width="12" height="12" viewBox="0 0 12 12"><circle cx="6" cy="6" r="5.2" fill="#fff" stroke="#8a8a8a" stroke-width="1"/><path d="M2.1 9.6A5.2 5.2 0 0 1 9.6 2.1" fill="none" stroke="#606060" stroke-width="1.1"/></svg>
<div class="a t" style="top:231.00px;font-size:13px;color:#000;left:465.27px;transform-origin:0 0;transform:scaleX(0.8153);">Direct Deposit to Savings</div>
<svg style="left:447.50px;top:243.58px" width="12" height="12" viewBox="0 0 12 12"><circle cx="6" cy="6" r="5.2" fill="#fff" stroke="#8a8a8a" stroke-width="1"/><path d="M2.1 9.6A5.2 5.2 0 0 1 9.6 2.1" fill="none" stroke="#606060" stroke-width="1.1"/></svg>
<div class="a t" style="top:243.00px;font-size:13px;color:#000;left:465.27px;transform-origin:0 0;transform:scaleX(0.8202);">Direct Deposit to Loan</div>
<svg style="left:447.50px;top:255.44px" width="12" height="12" viewBox="0 0 12 12"><circle cx="6" cy="6" r="5.2" fill="#fff" stroke="#8a8a8a" stroke-width="1"/><path d="M2.1 9.6A5.2 5.2 0 0 1 9.6 2.1" fill="none" stroke="#606060" stroke-width="1.1"/></svg>
<div class="a t" style="top:255.00px;font-size:13px;color:#000;left:465.28px;transform-origin:0 0;transform:scaleX(0.8050);">Apply to Loan</div>
<svg style="left:447.50px;top:267.30px" width="12" height="12" viewBox="0 0 12 12"><circle cx="6" cy="6" r="5.2" fill="#fff" stroke="#8a8a8a" stroke-width="1"/><path d="M2.1 9.6A5.2 5.2 0 0 1 9.6 2.1" fill="none" stroke="#606060" stroke-width="1.1"/></svg>
<div class="a t" style="top:267.00px;font-size:13px;color:#000;left:465.28px;transform-origin:0 0;transform:scaleX(0.8023);">Apply to Contract</div>
<svg style="left:447.50px;top:279.16px" width="12" height="12" viewBox="0 0 12 12"><circle cx="6" cy="6" r="5.2" fill="#fff" stroke="#8a8a8a" stroke-width="1"/><path d="M2.1 9.6A5.2 5.2 0 0 1 9.6 2.1" fill="none" stroke="#606060" stroke-width="1.1"/></svg>
<div class="a t" style="top:279.00px;font-size:13px;color:#000;left:465.28px;transform-origin:0 0;transform:scaleX(0.8075);">Wire Transfer</div>
<svg style="left:447.50px;top:291.02px" width="12" height="12" viewBox="0 0 12 12"><circle cx="6" cy="6" r="5.2" fill="#fff" stroke="#8a8a8a" stroke-width="1"/><path d="M2.1 9.6A5.2 5.2 0 0 1 9.6 2.1" fill="none" stroke="#606060" stroke-width="1.1"/></svg>
<div class="a t" style="top:290.00px;font-size:13px;color:#000;left:465.28px;transform-origin:0 0;transform:scaleX(0.7970);">General Ledger</div>
<div class="a t" style="top:207.00px;font-size:13px;color:#000;left:518.46px;transform-origin:0 0;transform:scaleX(0.8354);">Impound Acct</div>
<div class="a inp" style="left:589.80px;top:201.70px;width:29.60px;height:19.80px;"></div>
<div class="a " style="left:550.20px;top:262.00px;width:71.40px;height:36.80px;border:1px solid;border-color:#a4a4a4 #fff #fff #a4a4a4"></div>
<div class="a inp" style="left:552.80px;top:266.50px;width:11.20px;height:11.50px;"></div>
<svg style="left:555.00px;top:269.00px" width="7.5" height="7" viewBox="0 0 7.5 7"><path d="M.6 2.8l2.2 2.6 4-5" fill="none" stroke="#000" stroke-width="1.9"/></svg>
<div class="a t" style="top:266.00px;font-size:13px;color:#000;left:568.77px;transform-origin:0 0;transform:scaleX(0.8100);">Enable for</div>
<div class="a t" style="top:281.00px;font-size:13px;color:#000;left:551.08px;transform-origin:0 0;transform:scaleX(0.7941);">Payment Entry</div>
<div class="a " style="left:631.20px;top:199.30px;width:6.80px;height:106.90px;border-left:1px solid #9a9a9a;border-top:1px solid #9a9a9a;box-shadow:inset 1px 1px 0 #fff"></div>
<div class="a " style="left:631.20px;top:305.00px;width:4.30px;height:1.00px;background:#9a9a9a"></div>
<div class="a " style="left:632.20px;top:306.00px;width:3.80px;height:1.00px;background:#fff"></div>
<div class="a " style="left:10.00px;top:307.50px;width:628.00px;height:184.30px;background:#d0e0fc;border-left:1px solid #dbe7fb"></div>
<div class="a " style="left:14.30px;top:309.40px;width:620.90px;height:179.60px;background:#fff;border:1px solid;border-color:#6a6a6a #f4f4f4 #f4f4f4 #6a6a6a;box-shadow:inset 1px 1px 0 #606060"></div>
<div class="a " style="left:16.40px;top:310.80px;width:600.40px;height:17.40px;background:#ececec;border-bottom:1.4px solid #3a3a3a"></div>
<div class="a " style="left:26.40px;top:311.00px;width:1.50px;height:17.00px;background:#3a3a3a"></div>
<div class="a " style="left:181.50px;top:311.00px;width:1.50px;height:17.00px;background:#3a3a3a"></div>
<div class="a " style="left:343.40px;top:311.00px;width:1.50px;height:17.00px;background:#3a3a3a"></div>
<div class="a " style="left:438.80px;top:311.00px;width:1.50px;height:17.00px;background:#3a3a3a"></div>
<div class="a " style="left:503.10px;top:311.00px;width:1.50px;height:17.00px;background:#3a3a3a"></div>
<div class="a " style="left:568.10px;top:311.00px;width:1.50px;height:17.00px;background:#3a3a3a"></div>
<div class="a " style="left:16.40px;top:328.80px;width:11.00px;height:35.70px;background:#ececec"></div>
<div class="a " style="left:26.40px;top:328.80px;width:1.40px;height:35.70px;background:#3a3a3a"></div>
<div class="a " style="left:16.40px;top:345.20px;width:10.60px;height:1.20px;background:#3a3a3a"></div>
<div class="a " style="left:16.40px;top:363.80px;width:11.40px;height:1.20px;background:#3a3a3a"></div>
<svg style="left:19.20px;top:332.00px" width="6" height="11" viewBox="0 0 6 11"><path d="M0 0v11l6-5.5z" fill="#000"/></svg>
<div class="a " style="left:181.90px;top:329.00px;width:1.00px;height:35.60px;background:#c4c4c4"></div>
<div class="a " style="left:343.80px;top:329.00px;width:1.00px;height:35.60px;background:#c4c4c4"></div>
<div class="a " style="left:439.20px;top:329.00px;width:1.00px;height:35.60px;background:#c4c4c4"></div>
<div class="a " style="left:503.50px;top:329.00px;width:1.00px;height:35.60px;background:#c4c4c4"></div>
<div class="a " style="left:568.50px;top:329.00px;width:1.00px;height:35.60px;background:#c4c4c4"></div>
<div class="a " style="left:27.80px;top:345.40px;width:589.00px;height:1.00px;background:#c4c4c4"></div>
<div class="a " style="left:27.80px;top:364.00px;width:589.00px;height:1.00px;background:#c4c4c4"></div>
<div class="a t" style="top:313.00px;font-size:13px;color:#000;left:30.28px;transform-origin:0 0;transform:scaleX(0.8011);">Payee Name</div>
<div class="a t" style="top:313.00px;font-size:13px;color:#000;left:184.07px;transform-origin:0 0;transform:scaleX(0.8134);">Alt Payee Name</div>
<div class="a t" style="top:313.00px;font-size:13px;color:#000;left:347.77px;transform-origin:0 0;transform:scaleX(0.8161);">Type</div>
<div class="a t" style="top:313.00px;font-size:13px;color:#000;left:441.78px;transform-origin:0 0;transform:scaleX(0.8035);">Amount</div>
<div class="a t" style="top:313.00px;font-size:13px;color:#000;left:507.17px;transform-origin:0 0;transform:scaleX(0.8167);">Percentage</div>
<div class="a " style="left:570.00px;top:311.00px;width:45.60px;height:16.50px;overflow:hidden"><div class="a t" style="top:2.00px;font-size:13px;color:#000;left:1.98px;transform-origin:0 0;transform:scaleX(0.8043);">Description</div>
</div>
<div class="a t" style="top:331.00px;font-size:13px;color:#000;font-weight:bold;text-decoration:underline;left:29.43px;transform-origin:0 0;transform:scaleX(0.8753);">James Smith</div>
<div class="a " style="left:184.00px;top:329.00px;width:159.60px;height:16.00px;overflow:hidden"><div class="a t" style="top:2.00px;font-size:13px;color:#000;font-weight:bold;text-decoration:underline;left:1.30px;transform-origin:0 0;transform:scaleX(0.9305);">STATE EMPLOYEES CREDIT UNION</div>
</div>
<div class="a t" style="top:331.00px;font-size:13px;color:#000;font-weight:bold;text-decoration:underline;left:347.02px;transform-origin:0 0;transform:scaleX(0.8859);">Primary Payee</div>
<div class="a t" style="top:331.00px;font-size:13px;color:#000;font-weight:bold;text-decoration:underline;right:149.00px;transform-origin:100% 0;transform:scaleX(0.9529);">$0.00</div>
<div class="a t" style="top:331.00px;font-size:13px;color:#000;font-weight:bold;text-decoration:underline;left:512.77px;transform-origin:0 0;transform:scaleX(0.9683);">100.0000</div>
<div class="a " style="left:570.00px;top:329.00px;width:45.60px;height:16.00px;overflow:hidden"><div class="a t" style="top:2.00px;font-size:13px;color:#000;font-weight:bold;text-decoration:underline;left:2.20px;transform-origin:0 0;transform:scaleX(0.9261);">DEPOSIT ACCT #3000</div>
</div>
<div class="a t" style="top:349.00px;font-size:13px;color:#000;left:29.49px;transform-origin:0 0;transform:scaleX(0.7813);">James Smith</div>
<div class="a " style="left:184.00px;top:347.00px;width:159.60px;height:17.00px;overflow:hidden"><div class="a t" style="top:2.00px;font-size:13px;color:#000;left:0.47px;transform-origin:0 0;transform:scaleX(0.8116);">COMMUNITY 1ST BANK LAS VEGAS</div>
</div>
<div class="a t" style="top:349.00px;font-size:13px;color:#000;left:347.07px;transform-origin:0 0;transform:scaleX(0.8108);">Secondary Payee</div>
<div class="a t" style="top:349.00px;font-size:13px;color:#000;right:149.00px;transform-origin:100% 0;transform:scaleX(0.7980);">$300.00</div>
<div class="a t" style="top:349.00px;font-size:13px;color:#000;left:571.99px;transform-origin:0 0;transform:scaleX(0.7895);">CREDIT</div>
<div class="a " style="left:616.80px;top:310.80px;width:17.00px;height:176.60px;background:#f0f0f0"></div>
<div class="a " style="left:16.40px;top:470.50px;width:617.40px;height:16.90px;background:#f0f0f0"></div>
<div class="a " style="left:617.60px;top:328.30px;width:14.10px;height:82.30px;background:#cdcdcd"></div>
<div class="a " style="left:33.30px;top:471.30px;width:16.70px;height:14.10px;background:#cdcdcd"></div>
<svg style="left:620.60px;top:316.60px" width="7.6" height="5.6" viewBox="0 0 7.6 5.6"><path d="M0.7 5l3.1-3.4 3.1 3.4" fill="none" stroke="#505050" stroke-width="2.1"/></svg>
<svg style="left:620.60px;top:459.60px" width="7.6" height="5.6" viewBox="0 0 7.6 5.6"><path d="M0.7 0.6l3.1 3.4 3.1-3.4" fill="none" stroke="#505050" stroke-width="2.1"/></svg>
<svg style="left:20.60px;top:474.80px" width="5.6" height="7.6" viewBox="0 0 5.6 7.6"><path d="M5 0.7l-3.4 3.1 3.4 3.1" fill="none" stroke="#505050" stroke-width="2.1"/></svg>
<svg style="left:605.60px;top:474.80px" width="5.6" height="7.6" viewBox="0 0 5.6 7.6"><path d="M0.6 0.7l3.4 3.1-3.4 3.1" fill="none" stroke="#505050" stroke-width="2.1"/></svg>
<div class="a " style="left:6.00px;top:105.00px;width:4.10px;height:392.00px;background:#f8fafe"></div>
<div class="a " style="left:6.00px;top:48.00px;width:2.00px;height:27.00px;background:#f6f8fd"></div>
<div class="a " style="left:10.10px;top:491.80px;width:628.90px;height:1.20px;background:#6a6a6a"></div>
<div class="a " style="left:638.00px;top:170.80px;width:1.00px;height:322.20px;background:#6a6a6a"></div>
<div class="a " style="left:639.00px;top:170.80px;width:3.00px;height:325.00px;background:#fdfdff"></div>
<div class="a " style="left:6.00px;top:493.00px;width:636.00px;height:2.80px;background:#fdfdff"></div>
<div class="a " style="left:6.00px;top:495.70px;width:637.00px;height:1.30px;background:#6a6a6a"></div>
<div class="a " style="left:642.00px;top:73.50px;width:1.10px;height:423.50px;background:#6a6a6a"></div>

</div>
</body>
</html>
